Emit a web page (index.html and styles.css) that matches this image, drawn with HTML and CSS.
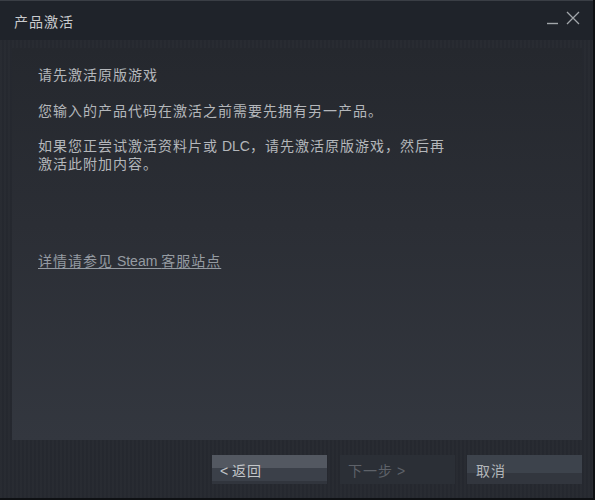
FILE: index.html
```html
<!DOCTYPE html>
<html lang="zh-CN">
<head>
<meta charset="utf-8">
<title>产品激活</title>
<link rel="stylesheet" href="styles.css">
</head>
<body>
<div class="window">
  <div class="titlebar">
    <div class="title">产品激活</div>
    <div class="controls">
      <svg class="ctl" width="12" height="12" viewBox="0 0 12 12"><path d="M0 10.5H11" stroke="#a2a6aa" stroke-width="1.4" fill="none"/></svg>
      <svg class="ctl close" width="14" height="14" viewBox="0 0 14 14"><path d="M1 1L13 13M13 1L1 13" stroke="#a2a6aa" stroke-width="1.3" fill="none"/></svg>
    </div>
  </div>
  <div class="main">
    <div class="panel">
      <p class="line heading">请先激活原版游戏</p>
      <p class="line">您输入的产品代码在激活之前需要先拥有另一产品。</p>
      <p class="line">如果您正尝试激活资料片或<span class="lat"> DLC</span>，请先激活原版游戏，然后再<br>激活此附加内容。</p>
      <a class="link" href="#">详情请参见<span class="lat"> Steam </span>客服站点</a>
    </div>
    <div class="footer">
      <button class="btn back"><span class="lat">&lt; </span>返回</button>
      <button class="btn next">下一步<span class="lat"> &gt;</span></button>
      <button class="btn cancel">取消</button>
    </div>
  </div>
</div>
</body>
</html>
```

FILE: styles.css
```css
html, body {
  margin: 0;
  padding: 0;
}
body {
  width: 595px;
  height: 500px;
  background: #0e1013;
  font-family: "Liberation Sans", "Noto Sans CJK SC", sans-serif;
  font-size: 14px;
  letter-spacing: 1px;
  overflow: hidden;
}
.lat {
  letter-spacing: 0;
}
.window {
  box-sizing: border-box;
  width: 593px;
  height: 498px;
  display: flex;
  flex-direction: column;
  background: #262930 repeating-linear-gradient(90deg, rgba(255,255,255,0.012) 0 2px, rgba(0,0,0,0.02) 2px 4px);
  border-top: 1px solid #3a3e45;
}
.titlebar {
  height: 39px;
  background: #1f232a;
  display: flex;
  align-items: center;
  justify-content: space-between;
  padding: 0 13px 0 14px;
  flex: none;
}
.title {
  color: #c9cbce;
  line-height: 18px;
  margin-top: 2px;
}
.controls {
  display: flex;
  align-items: flex-start;
  gap: 7px;
  margin-top: -4px;
}
.ctl {
  display: block;
}
.close {
  margin-top: -2px;
}
.main {
  flex: 1;
  display: flex;
  flex-direction: column;
  padding: 8px 11px 0 12px;
}
.panel {
  height: 392px;
  box-sizing: border-box;
  padding: 18px 26px 0 26px;
  background: linear-gradient(180deg, #25282e 0%, #2b2e35 45%, #33373f 100%);
}
.line {
  margin: 0 0 17px 0;
  color: #b4b7bb;
  line-height: 18px;
}
.line.heading {
  margin-bottom: 18px;
}
.link {
  display: inline-block;
  margin-top: 62px;
  color: #959ba2;
  line-height: 18px;
  text-decoration: underline;
  text-underline-offset: 2px;
}
.footer {
  display: flex;
  justify-content: flex-end;
  margin-top: 15px;
}
.btn {
  width: 115px;
  height: 29px;
  border: none;
  padding: 0 0 0 8px;
  text-align: left;
  font-family: "Liberation Sans", "Noto Sans CJK SC", sans-serif;
  font-size: 14px;
  letter-spacing: 1px;
  line-height: 18px;
  padding-top: 2px;
}
.back {
  margin-right: 13px;
  background: linear-gradient(180deg, #535861 0 13px, #3b4049 13px 26px, #31353d 26px);
  color: #c3c6c9;
}
.next {
  margin-right: 12px;
  background: #2b2f36;
  color: #5e6269;
}
.cancel {
  padding-left: 9px;
  background: linear-gradient(180deg, #3d434c 0 18px, #32363e 18px);
  color: #b3b6ba;
}
```
